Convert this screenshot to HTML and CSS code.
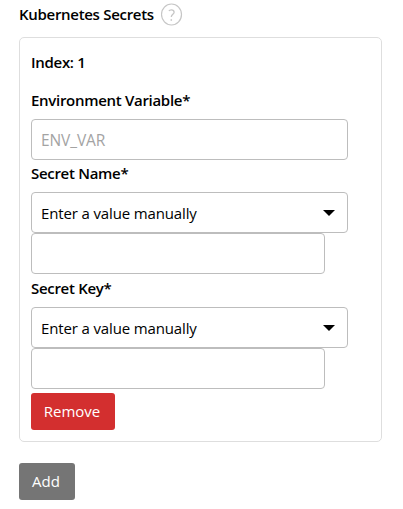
FILE: index.html
```
<!DOCTYPE html>
<html lang="en">
<head>
<meta charset="utf-8">
<title>Kubernetes Secrets</title>
<link rel="stylesheet" href="styles.css">
</head>
<body>
<main class="form">
  <header class="heading">
    <span class="label title">Kubernetes Secrets</span>
    <svg class="help" width="22" height="24" viewBox="0 0 22 24" fill="none" stroke="#c6c6c6">
      <ellipse cx="10.5" cy="11.5" rx="10" ry="10.5" stroke-width="1.2"/>
      <path d="M7.9 8C8.4 7.1 9.2 6.8 10.3 6.8C12.1 6.8 13.1 7.8 13.1 9.2C13.1 11.2 10.3 11.4 10.3 14" stroke-width="1.3"/>
      <path d="M10.3 16.2V17.8" stroke-width="1.5"/>
    </svg>
  </header>
  <section class="card">
    <div class="label index">Index: 1</div>
    <label class="label env-label">Environment Variable*</label>
    <div class="field"><span class="placeholder">ENV_VAR</span></div>
    <label class="label name-label">Secret Name*</label>
    <div class="field select"><span class="value">Enter a value manually</span><svg width="12" height="6" viewBox="0 0 12 6"><path d="M0 0H12L6 6Z"/></svg></div>
    <div class="field short"></div>
    <label class="label key-label">Secret Key*</label>
    <div class="field select"><span class="value">Enter a value manually</span><svg width="12" height="6" viewBox="0 0 12 6"><path d="M0 0H12L6 6Z"/></svg></div>
    <div class="field short"></div>
    <button class="button remove">Remove</button>
  </section>
  <button class="button add">Add</button>
</main>
</body>
</html>
```
FILE: styles.css
```
* { box-sizing: border-box; }
body {
  margin: 0;
  background: #fff;
  color: #000;
  font: 15px/20px "Open Sans", "Noto Sans", sans-serif;
}
.form { padding: 3px 21px 0 19px; }
.heading { display: flex; height: 24px; }
.label {
  display: block;
  height: 20px;
  font-size: 15px;
  font-weight: 600;
  line-height: 19px;
  white-space: nowrap;
  letter-spacing: -0.3px;
}
.title { width: 142px; margin-top: 2px; }
.help { display: block; }
.card {
  height: 405px;
  margin-top: 10px;
  padding: 15px 11px 0;
  border: 1px solid #dedede;
  border-radius: 5px;
}
.index { margin-bottom: 18px; }
.env-label { margin-bottom: 8px; }
.name-label { margin: 4px 0 8px; }
.key-label { margin: 5px 0 8px; }
.field {
  display: flex;
  align-items: center;
  width: 317px;
  height: 41px;
  padding: 0 12px 0 9px;
  border: 1px solid #bdbdbd;
  border-radius: 4px;
  white-space: nowrap;
}
.select { justify-content: space-between; }
.short { width: 294px; }
.placeholder { font-size: 15.5px; color: #a3a3a3; letter-spacing: -0.1px; }
.value { letter-spacing: -0.14px; }
.button {
  display: block;
  height: 37px;
  padding: 0 2px 0 0;
  border: 0;
  border-radius: 3px;
  color: #fff;
  font: 15px/37px "Open Sans", "Noto Sans", sans-serif;
}
.remove { width: 84px; margin-top: 4px; background: #d32f2f; }
.add { width: 56px; margin-top: 21px; background: #757575; }
```
